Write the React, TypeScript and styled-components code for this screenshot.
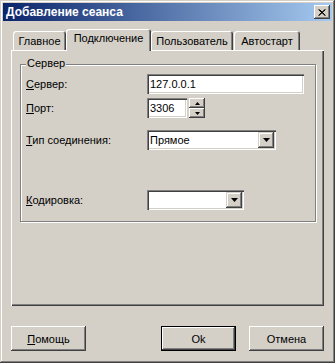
import React from 'react';
import styled, { createGlobalStyle } from 'styled-components';

const GlobalStyle = createGlobalStyle`
  html, body {
    margin: 0;
    padding: 0;
    background: #d4d0c8;
  }
  * {
    box-sizing: border-box;
  }
`;

const FACE = '#d4d0c8';
const SHADOW = '#808080';
const DARK = '#404040';

const Window = styled.div`
  width: 335px;
  height: 363px;
  padding: 3px;
  background: ${FACE};
  font-family: 'Liberation Sans', Arial, sans-serif;
  font-size: 11px;
  color: #000;
  box-shadow: inset -1px -1px ${DARK}, inset 1px 1px ${FACE}, inset -2px -2px ${SHADOW}, inset 2px 2px #fff;
  display: flex;
  flex-direction: column;
`;

const TitleBar = styled.div`
  height: 18px;
  display: flex;
  align-items: center;
  justify-content: space-between;
  padding: 0 2px 0 3px;
  background: linear-gradient(to right, #0a246a, #a6caf0);
`;

const Title = styled.span`
  color: #fff;
  font-weight: bold;
  font-size: 12px;
`;

const CloseButton = styled.div`
  width: 16px;
  height: 14px;
  background: ${FACE};
  box-shadow: inset -1px -1px ${DARK}, inset 1px 1px #fff, inset -2px -2px ${SHADOW};
  display: flex;
  align-items: center;
  justify-content: center;
`;

const Content = styled.div`
  padding: 8px 8px 0 8px;
  display: flex;
  flex-direction: column;
`;

const TabRow = styled.div`
  display: flex;
  align-items: flex-end;
  height: 21px;
  padding-left: 2px;
  position: relative;
  z-index: 1;
`;

const Tab = styled.div<{ $w: number; $active?: boolean; $gap?: number }>`
  width: ${(p) => p.$w}px;
  height: ${(p) => (p.$active ? 22 : 19)}px;
  margin-bottom: ${(p) => (p.$active ? -1 : 0)}px;
  margin-left: ${(p) => p.$gap || 0}px;
  background: ${FACE};
  border-radius: 3px 3px 0 0;
  box-shadow: inset 1px 1px #fff, inset -1px 0 ${DARK}, inset -2px 0 ${SHADOW};
  display: flex;
  align-items: ${(p) => (p.$active ? 'flex-start' : 'center')};
  padding-top: ${(p) => (p.$active ? 3 : 1)}px;
  justify-content: center;
  white-space: nowrap;
`;

const Panel = styled.div`
  width: 313px;
  height: 256px;
  padding: 14px 8px 0 9px;
  background: ${FACE};
  box-shadow: inset 1px 1px #fff, inset -1px -1px ${DARK}, inset -2px -2px ${SHADOW};
`;

const GroupBox = styled.div`
  position: relative;
  width: 296px;
  height: 158px;
  border: 1px solid ${SHADOW};
  border-right-color: ${SHADOW};
  box-shadow: inset 1px 1px #fff, 1px 1px #fff;
  padding: 9px 0 0 5px;
`;

const Legend = styled.span`
  position: absolute;
  top: -8px;
  left: 5px;
  padding: 0 1px;
  background: ${FACE};
`;

const FieldRow = styled.div<{ $top: number }>`
  display: grid;
  grid-template-columns: 121px auto;
  align-items: center;
  margin-top: ${(p) => p.$top}px;
`;

const Label = styled.span``;

const Accel = styled.span`
  text-decoration: underline;
`;

const Sunken = styled.div<{ $w: number }>`
  width: ${(p) => p.$w}px;
  height: 20px;
  background: #fff;
  box-shadow: inset 1px 1px ${SHADOW}, inset 2px 2px ${DARK}, inset -1px -1px #fff, inset -2px -2px ${FACE};
  padding: 0 2px 0 3px;
  display: flex;
  align-items: center;
  justify-content: space-between;
`;

const Controls = styled.div`
  display: flex;
  gap: 2px;
`;

const Spin = styled.div`
  display: flex;
  flex-direction: column;
`;

const SpinButton = styled.div`
  width: 16px;
  height: 10px;
  background: ${FACE};
  box-shadow: inset -1px -1px ${DARK}, inset 1px 1px #fff, inset -2px -2px ${SHADOW};
  display: flex;
  align-items: center;
  justify-content: center;
`;

const DropButton = styled.div`
  width: 16px;
  height: 16px;
  background: ${FACE};
  box-shadow: inset -1px -1px ${DARK}, inset 1px 1px ${FACE}, inset -2px -2px ${SHADOW}, inset 2px 2px #fff;
  display: flex;
  align-items: center;
  justify-content: center;
`;

const Footer = styled.div`
  display: flex;
  margin-top: 20px;
`;

const Button = styled.div<{ $default?: boolean; $gap?: number }>`
  width: 75px;
  height: 25px;
  margin-left: ${(p) => p.$gap || 0}px;
  background: ${FACE};
  display: flex;
  align-items: center;
  justify-content: center;
  box-shadow: ${(p) =>
    p.$default
      ? `inset 0 0 0 1px #000, inset -2px -2px ${DARK}, inset 2px 2px #fff, inset -3px -3px ${SHADOW}`
      : `inset -1px -1px ${DARK}, inset 1px 1px #fff, inset -2px -2px ${SHADOW}`};
`;

const Arrow = ({ up, size = 3 }: { up?: boolean; size?: number }) => (
  <svg width={size * 2 + 1} height={size + 1} viewBox={`0 0 ${size * 2 + 1} ${size + 1}`}>
    <polygon
      points={up ? `0,${size + 1} ${size * 2 + 1},${size + 1} ${size + 0.5},0` : `0,0 ${size * 2 + 1},0 ${size + 0.5},${size + 1}`}
      fill="#000"
    />
  </svg>
);

const Combo = ({ width, value }: { width: number; value?: string }) => (
  <Sunken $w={width}>
    <span>{value}</span>
    <DropButton>
      <Arrow />
    </DropButton>
  </Sunken>
);

const App: React.FC = () => {
  return (
    <>
      <GlobalStyle />
      <Window>
        <TitleBar>
          <Title>Добавление сеанса</Title>
          <CloseButton>
            <svg width="8" height="7" viewBox="0 0 8 7">
              <path d="M0.5 0.5 L7 6.5 M1.5 0.5 L7.5 6.5 M7 0.5 L0.5 6.5 M7.5 0.5 L1 6.5" stroke="#000" strokeWidth="1" />
            </svg>
          </CloseButton>
        </TitleBar>
        <Content>
          <TabRow>
            <Tab $w={53}>Главное</Tab>
            <Tab $w={85} $active>
              Подключение
            </Tab>
            <Tab $w={82}>Пользователь</Tab>
            <Tab $w={66} $gap={1}>
              Автостарт
            </Tab>
          </TabRow>
          <Panel>
            <GroupBox>
              <Legend>Сервер</Legend>
              <FieldRow $top={0}>
                <Label>
                  <Accel>С</Accel>ервер:
                </Label>
                <Sunken $w={157}>127.0.0.1</Sunken>
              </FieldRow>
              <FieldRow $top={4}>
                <Label>
                  <Accel>П</Accel>орт:
                </Label>
                <Controls>
                  <Sunken $w={40}>3306</Sunken>
                  <Spin>
                    <SpinButton>
                      <Arrow up size={2} />
                    </SpinButton>
                    <SpinButton>
                      <Arrow size={2} />
                    </SpinButton>
                  </Spin>
                </Controls>
              </FieldRow>
              <FieldRow $top={12}>
                <Label>
                  <Accel>Т</Accel>ип соединения:
                </Label>
                <Combo width={129} value="Прямое" />
              </FieldRow>
              <FieldRow $top={40}>
                <Label>
                  <Accel>К</Accel>одировка:
                </Label>
                <Combo width={97} />
              </FieldRow>
            </GroupBox>
          </Panel>
          <Footer>
            <Button>
              <span>
                <Accel>П</Accel>омощь
              </span>
            </Button>
            <Button $default $gap={75}>
              Ok
            </Button>
            <Button $gap={13}>Отмена</Button>
          </Footer>
        </Content>
      </Window>
    </>
  );
};

export default App;
